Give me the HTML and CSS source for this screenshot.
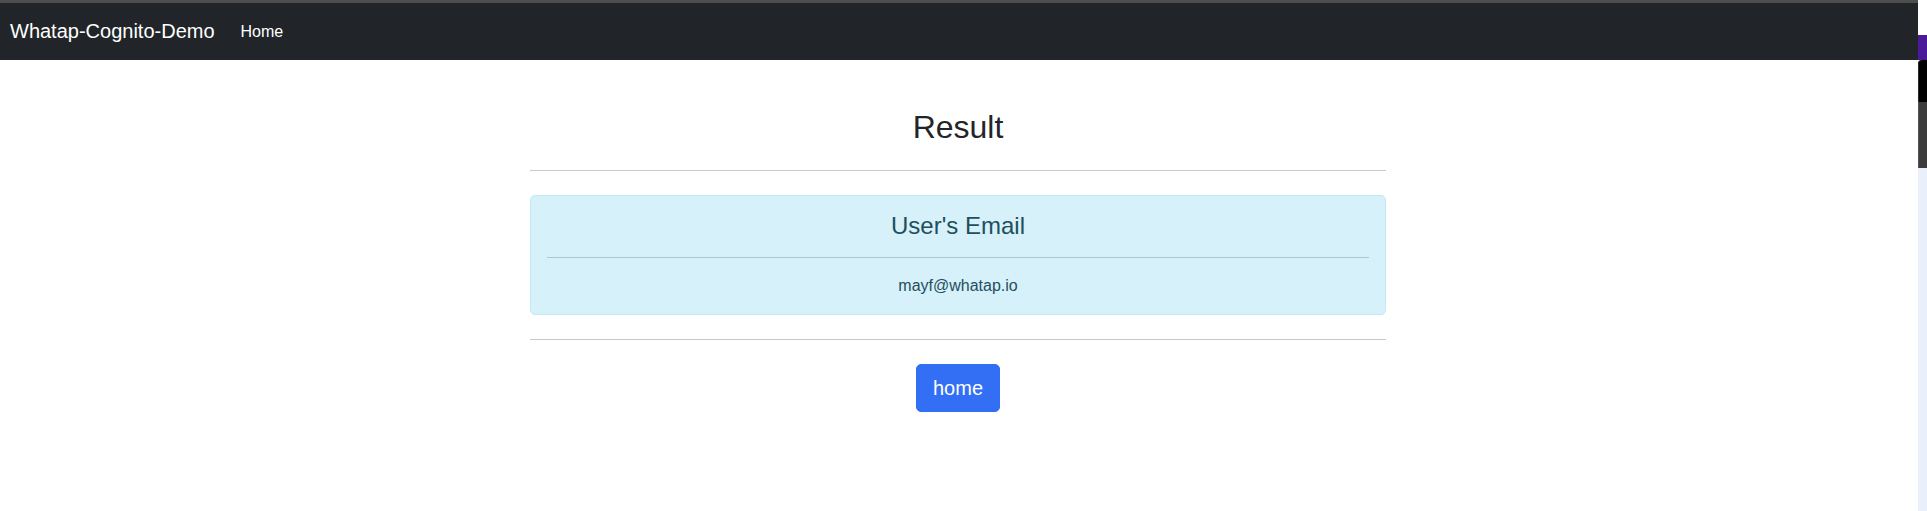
FILE: index.html
```html
<!DOCTYPE html>
<html lang="en">
<head>
<meta charset="utf-8">
<title>Whatap-Cognito-Demo</title>
<link rel="stylesheet" href="styles.css">
</head>
<body>
<div class="page">
  <div class="main">
    <div class="topline"></div>
    <nav class="navbar">
      <a class="brand" href="#">Whatap-Cognito-Demo</a>
      <a class="nav-link" href="#">Home</a>
    </nav>
    <div class="container">
      <h2 class="title">Result</h2>
      <hr class="rule">
      <div class="alert">
        <h4 class="alert-title">User's Email</h4>
        <hr class="alert-rule">
        <p class="alert-text">mayf@whatap.io</p>
      </div>
      <hr class="rule">
      <div class="actions">
        <a class="btn" href="#">home</a>
      </div>
    </div>
  </div>
  <div class="side">
    <div class="side-white"></div>
    <div class="side-purple"></div>
    <div class="side-black"></div>
    <div class="side-gray"></div>
    <div class="side-light"></div>
  </div>
</div>
</body>
</html>
```

FILE: styles.css
```css
* { box-sizing: border-box; }
html, body { margin: 0; padding: 0; height: 100%; }
body {
  font-family: "Liberation Sans", Arial, sans-serif;
  color: #212529;
  background: #fff;
}
.page {
  display: flex;
  min-height: 511px;
}
.main {
  flex: 0 0 1918px;
  display: flex;
  flex-direction: column;
}
.topline {
  height: 3px;
  background: #4e4e4e;
}
.navbar {
  height: 57px;
  background: #212529;
  display: flex;
  align-items: center;
  padding-left: 10px;
}
.brand {
  color: #fff;
  text-decoration: none;
  font-size: 20px;
  margin-right: 26px;
}
.nav-link {
  color: #fff;
  text-decoration: none;
  font-size: 16px;
}
.container {
  width: 856px;
  margin-left: 530px;
  padding-top: 48px;
  text-align: center;
}
.title {
  margin: 0 0 8px;
  font-size: 32px;
  font-weight: 500;
  line-height: 1.2;
}
.rule {
  margin: 24px 0;
  border: 0;
  border-top: 1px solid #c9c9c9;
  height: 0;
}
.alert {
  background: #d6f1f9;
  border: 1px solid #bfe9f5;
  border-radius: 5px;
  padding: 16px;
  color: #1f4f5d;
}
.alert-title {
  margin: 0;
  font-size: 24px;
  font-weight: 500;
  line-height: 1.2;
}
.alert-rule {
  margin: 16px 0;
  border: 0;
  border-top: 1px solid #a6cbd5;
  height: 0;
}
.alert-text {
  margin: 0;
  font-size: 16px;
  line-height: 24px;
}
.actions { display: flex; justify-content: center; }
.btn {
  display: inline-block;
  background: #336ff4;
  color: #fff;
  text-decoration: none;
  font-size: 20px;
  line-height: 30px;
  padding: 8px 16px;
  border: 1px solid #336ff4;
  border-radius: 5px;
}
.side {
  flex: 0 0 9px;
  display: flex;
  flex-direction: column;
}
.side-white { height: 35px; background: #fff; }
.side-purple { height: 25px; background: #4a1a98; }
.side-black { height: 42px; background: #000; border-top-left-radius: 4px; box-shadow: inset 1px 0 0 #2a2a2a; }
.side-gray { height: 66px; background: #3b3b3b; border-left: 1px solid #555; }
.side-light { flex: 1; background: #e9f0fb; }
```
